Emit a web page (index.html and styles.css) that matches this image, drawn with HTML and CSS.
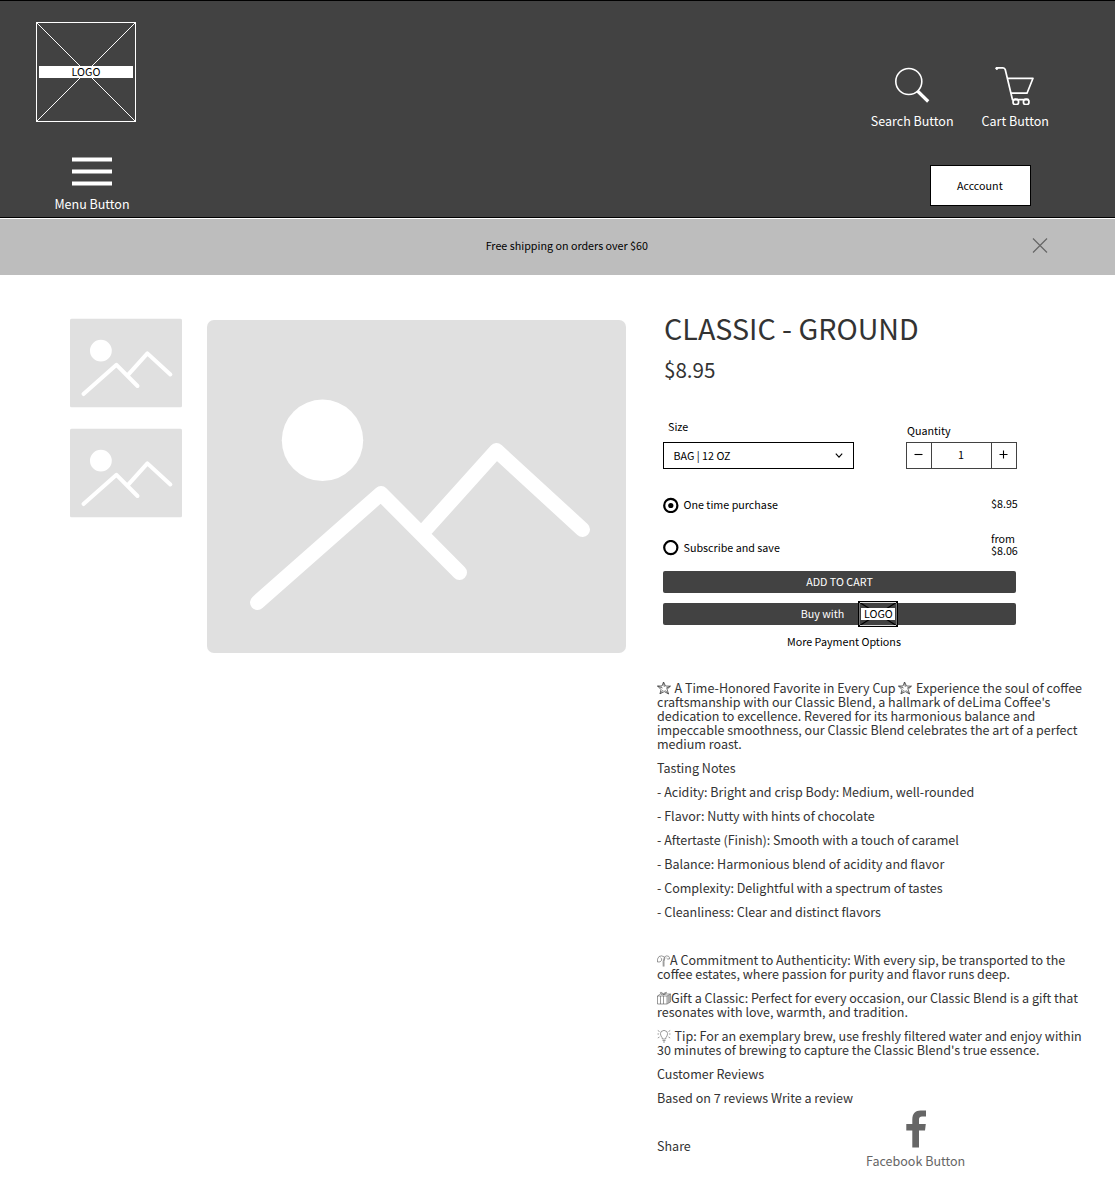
FILE: index.html
```html
<!DOCTYPE html>
<html lang="en">
<head>
<meta charset="utf-8">
<title>Classic - Ground</title>
<link rel="stylesheet" href="styles.css">
</head>
<body>
<svg class="defs" width="0" height="0" aria-hidden="true">
  <symbol id="picture" viewBox="0 0 419 333">
    <rect width="419" height="333" rx="7" fill="#e0e0e0"/>
    <circle cx="115.5" cy="120.3" r="40.7" fill="#fff"/>
    <path d="M50.500 282.500 174 173.500 252.500 252.500M218 210 289.500 130.500 375.500 209.500" fill="none" stroke="#fff" stroke-width="15" stroke-linecap="round" stroke-linejoin="round"/>
  </symbol>
  <symbol id="star" viewBox="0 0 14 14">
    <path d="M6.500 1 8.500 5 13.400 5.200 10 8.300 11.600 13 7.300 10.600 3 12.800 4 8.500.5 5 5 5ZM6.500 1 7.300 5.800M13.400 5.200 9 7.300M11.600 13 8 9.300M3 12.800 6 9.200M.5 5 5.500 7" fill="none" stroke="#444" stroke-width=".8"/>
  </symbol>
</svg>

<header class="header">
  <div class="header-left">
    <div class="logo">
      <svg class="logo-cross" viewBox="0 0 100 100" shape-rendering="crispEdges"><path d="M.5.5 99.500 99.500M99.500.5.5 99.500" stroke="#fff"/></svg>
      <span class="logo-text">LOGO</span>
    </div>
    <div class="menu">
      <svg width="40" height="30" viewBox="0 0 40 30"><path d="M0 2.500H40M0 14.500H40M0 26.500H40" stroke="#fff" stroke-width="4"/></svg>
      <span>Menu Button</span>
    </div>
  </div>
  <div class="header-right">
    <div class="actions">
      <div class="action search">
        <svg width="40" height="40" viewBox="0 0 40 40" fill="none" stroke="#fff"><circle cx="16.800" cy="16.500" r="13" stroke-width="1.600"/><path d="M25.500 26 36.200 36.500" stroke-width="3.200"/></svg>
        <span>Search Button</span>
      </div>
      <div class="action">
        <svg width="40" height="40" viewBox="0 0 40 40" fill="none" stroke="#fff" stroke-width="1.700" stroke-linejoin="round"><path d="M1.500 4V2.800H8Q9.800 2.800 10.300 4.800L17.500 34.700H34M12.500 13.300H38L32 28.200H16"/><circle cx="1.800" cy="3.500" r="1" fill="#fff" stroke-width="1"/><circle cx="20.800" cy="36.900" r="2.800"/><circle cx="31.200" cy="36.900" r="2.800"/></svg>
        <span>Cart Button</span>
      </div>
    </div>
    <button class="account">Acccount</button>
  </div>
</header>

<div class="banner">
  <span>Free shipping on orders over $60</span>
  <svg width="16" height="16" viewBox="0 0 16 16"><path d="M1 .5 15 14.500M15 .5 1 14.500" stroke="#666" stroke-width="1.200"/></svg>
</div>

<main class="product">
  <div class="thumbs">
    <svg class="thumb"><use href="#picture" y=".5" width="112" height="89"/></svg>
    <svg class="thumb"><use href="#picture" y=".5" width="112" height="89"/></svg>
  </div>
  <svg class="hero"><use href="#picture"/></svg>

  <section class="details">
    <div class="buy">
      <h1>CLASSIC - GROUND</h1>
      <div class="price">$8.95</div>
      <div class="options">
        <div class="size">
          <label>Size</label>
          <div class="select"><span>BAG | 12 OZ</span>
            <svg width="8" height="6" viewBox="0 0 8 6"><path d="M.8.6 4 4.100 7.200.6" fill="none" stroke="#000" stroke-width="1.100"/></svg>
          </div>
        </div>
        <div class="quantity">
          <label>Quantity</label>
          <div class="stepper">
            <span class="step"><svg width="9" height="9" viewBox="0 0 9 9"><path d="M.5 4.500H8.500" stroke="#000" stroke-width="1.100"/></svg></span>
            <span class="count">1</span>
            <span class="step"><svg width="9" height="9" viewBox="0 0 9 9"><path d="M.5 4.500H8.500M4.500.5V8.500" stroke="#000" stroke-width="1.100"/></svg></span>
          </div>
        </div>
      </div>
      <div class="plan">
        <svg width="16" height="16" viewBox="0 0 16 16"><circle cx="7.800" cy="8.500" r="6.600" fill="none" stroke="#000" stroke-width="2.200"/><circle cx="7.800" cy="8.500" r="2.600"/></svg>
        <span class="plan-name">One time purchase</span><span class="plan-price">$8.95</span>
      </div>
      <div class="plan subscribe">
        <svg width="16" height="16" viewBox="0 0 16 16"><circle cx="7.800" cy="7.600" r="6.600" fill="none" stroke="#000" stroke-width="2.200"/></svg>
        <span class="plan-name">Subscribe and save</span><span class="plan-price">from<br>$8.06</span>
      </div>
      <button class="bar">ADD TO CART</button>
      <button class="bar pay">Buy with
        <span class="pay-logo">
          <svg class="logo-cross" viewBox="0 0 38 24"><path d="M0 0 38 24M38 0 0 24" stroke="#000" stroke-width="1.200"/><path d="M1 .5H37M1 23.500H37" stroke="#ddd"/><path d="M.5 1V23M37.500 1V23" stroke="#777"/></svg>
          <span class="logo-text">LOGO</span>
        </span>
      </button>
      <div class="more">More Payment Options</div>
    </div>

    <div class="copy">
      <p><svg class="emoji wide"><use href="#star"/></svg> A Time-Honored Favorite in Every Cup <svg class="emoji wide"><use href="#star"/></svg> Experience the soul of coffee<br>craftsmanship with our Classic Blend, a hallmark of deLima Coffee's<br>dedication to excellence. Revered for its harmonious balance and<br>impeccable smoothness, our Classic Blend celebrates the art of a perfect<br>medium roast.</p>
      <p>Tasting Notes</p>
      <p>- Acidity: Bright and crisp Body: Medium, well-rounded</p>
      <p>- Flavor: Nutty with hints of chocolate</p>
      <p>- Aftertaste (Finish): Smooth with a touch of caramel</p>
      <p>- Balance: Harmonious blend of acidity and flavor</p>
      <p>- Complexity: Delightful with a spectrum of tastes</p>
      <p>- Cleanliness: Clear and distinct flavors</p>
      <p class="spaced"><svg class="emoji sprout" viewBox="0 0 13 14"><path d="M6.200 13.500Q5.400 8 7.500 4M7 13.500Q6.500 8 8 4.500M7.500 4Q4.500 2 2 3.500-.3 6 .5 9 3.500 9.500 4.500 7.500 5.500 5.500 3.500 4.800M7.500 4Q9 2.200 11.500 3.200 13 4.800 12.400 6 10.200 6.500 9.500 5"/></svg>A Commitment to Authenticity: With every sip, be transported to the<br>coffee estates, where passion for purity and flavor runs deep.</p>
      <p><svg class="emoji" viewBox="0 0 14 14"><path d="M.5 5H10V13H.5ZM.5 5 3.500 3H13.500L10 5M13.500 3V11L10 13M3.500 5V13M6.500 5V13M5.500 4Q2 1.500 4 1.200 6 1.500 6.500 4 7 1 9.500 1.300 10 2.500 6.500 4M11.200 4.400V12M12.300 3.800V11.500"/></svg>Gift a Classic: Perfect for every occasion, our Classic Blend is a gift that<br>resonates with love, warmth, and tradition.</p>
      <p><svg class="emoji wide" viewBox="0 0 14 14"><path d="M5.400 10Q5.300 8.500 4 7 2.700 4.500 4.200 2.500 7 .2 9.800 2.500 11.300 4.500 10 7 8.700 8.500 8.600 10ZM5.500 11.500H8.500M6 13H8M.5 5H2M12 5H13.500M.8 1.500 2.500 2.500M13.200 1.500 11.500 2.500M.8 9 2.500 8M13.200 9 11.500 8"/></svg> Tip: For an exemplary brew, use freshly filtered water and enjoy within<br>30 minutes of brewing to capture the Classic Blend's true essence.</p>
      <p>Customer Reviews</p>
      <p>Based on 7 reviews Write a review</p>
    </div>
    <div class="share">
      <span class="share-label">Share</span>
      <div class="facebook">
        <svg width="20" height="38" viewBox="0 0 20 38"><path d="M6.300 37.500V20.500H.3V14H6.300V9.500C6.300 3.500 9.500.5 14.500.5H20V6.500H16Q13 6.500 13 9.500V14H19.800L19 20.500H13V37.500Z" fill="#666"/></svg>
        <span>Facebook Button</span>
      </div>
    </div>
  </section>
</main>
</body>
</html>
```
FILE: styles.css
```css
* { box-sizing: border-box; }
body {
  margin: 0;
  font: 10.74px/12px "Noto Sans CJK SC", "Noto Sans", sans-serif;
  color: #000;
  background: #fff;
  white-space: nowrap;
}
svg { display: block; flex: none; }
button { font: inherit; padding: 0; }
.defs { position: absolute; }

.header {
  display: flex;
  justify-content: space-between;
  height: 218px;
  padding: 21px 66px 0 36px;
  background: #424242;
  border-top: 1px solid #000;
  border-bottom: 1px solid #000;
  color: #fff;
  font-size: 12.53px;
  line-height: 14px;
}
.logo {
  position: relative;
  display: flex;
  align-items: center;
  width: 100px;
  height: 100px;
  padding: 0 2px;
  border: 1px solid #fff;
}
.logo-cross { position: absolute; inset: 0; width: 100%; height: 100%; }
.logo-text {
  position: relative;
  flex: 1;
  background: #fff;
  color: #000;
  font-size: 10.74px;
  line-height: 12px;
  text-align: center;
}
.menu {
  display: flex;
  flex-direction: column;
  align-items: center;
  gap: 10px;
  width: 112px;
  padding-top: 35px;
}
.header-right { display: flex; flex-direction: column; padding-top: 43px; }
.actions { display: flex; gap: 28px; }
.action { display: flex; flex-direction: column; align-items: center; gap: 9px; }
.account {
  width: 101px;
  height: 41px;
  margin: 37px 0 0 59px;
  padding-right: 1px;
  background: #fff;
  border: 1px solid #000;
  font-size: 10.74px;
  line-height: 12px;
  color: #000;
}

.banner {
  display: flex;
  align-items: center;
  justify-content: flex-end;
  gap: 384px;
  height: 56px;
  margin-top: 1px;
  padding: 0 67px 3px 0;
  background: #bdbdbd;
}

.product { display: flex; padding: 43px 0 0 70px; }
.thumbs { display: flex; flex-direction: column; gap: 20px; }
.thumb { width: 112px; height: 90px; }
.hero { width: 419px; height: 333px; margin: 2px 0 0 25px; }
.details { width: 440px; margin-left: 31px; }

.buy { width: 355px; margin-left: 6px; }
h1 {
  margin: -6px 0 0 1px;
  font-size: 28.65px;
  line-height: 32px;
  font-weight: 400;
  color: #333;
}
.price { margin: 14px 0 0 1px; font-size: 20.6px; line-height: 22px; color: #333; }
.options { display: flex; justify-content: space-between; align-items: flex-end; margin-top: 41px; padding-right: 1px; }
.size, .quantity { display: flex; flex-direction: column; }
.size { gap: 9px; }
.size label { padding-left: 5px; }
.quantity { gap: 5px; }
.quantity label { padding-left: 1px; }
.select {
  display: flex;
  align-items: center;
  justify-content: space-between;
  width: 191px;
  height: 27px;
  padding: 0 10.5px 0 9.5px;
  border: 1px solid #000;
}
.stepper { display: flex; width: 111px; height: 27px; border: 1px solid #424242; }
.step, .count { display: flex; align-items: center; justify-content: center; }
.step { width: 24px; padding: 0 1px 2px 0; }
.count { flex: 1; padding: 0 1px 1px 0; border: solid #424242; border-width: 0 1px; }
.plan { display: flex; align-items: center; height: 16px; margin-top: 28px; }
.plan-name { flex: 1; padding-left: 4.500px; }
.plan-price { width: 27px; padding-bottom: 2px; }
.subscribe { margin-top: 27px; }
.subscribe .plan-price { padding-bottom: 6px; }
.bar {
  display: flex;
  align-items: center;
  justify-content: center;
  width: 353px;
  height: 22px;
  margin-top: 15px;
  border: 0;
  border-radius: 2px;
  background: #424242;
  color: #fff;
}
.pay { margin-top: 10px; gap: 14px; padding-left: 20px; }
.pay-logo {
  position: relative;
  display: flex;
  align-items: center;
  width: 40px;
  height: 26px;
  padding: 0 2px;
  border: 1px solid #000;
}
.more { margin: 11px 0 0 124px; }

.copy { margin-top: 33px; font-size: 12.54px; line-height: 14px; color: #333; }
.copy p { margin: 0 0 10px; }
.copy .spaced { margin-top: 34px; }
.emoji {
  display: inline-block;
  width: 14px;
  height: 14px;
  vertical-align: top;
  fill: none;
  stroke: #555;
  stroke-width: .6;
}
.wide { margin-right: .7px; }
.sprout { width: 13px; }
.share { display: flex; margin-top: -5px; font-size: 12.54px; line-height: 14px; color: #333; }
.share-label { width: 209px; padding-top: 29px; }
.facebook { display: flex; flex-direction: column; align-items: center; gap: 6px; color: #666; }
```
